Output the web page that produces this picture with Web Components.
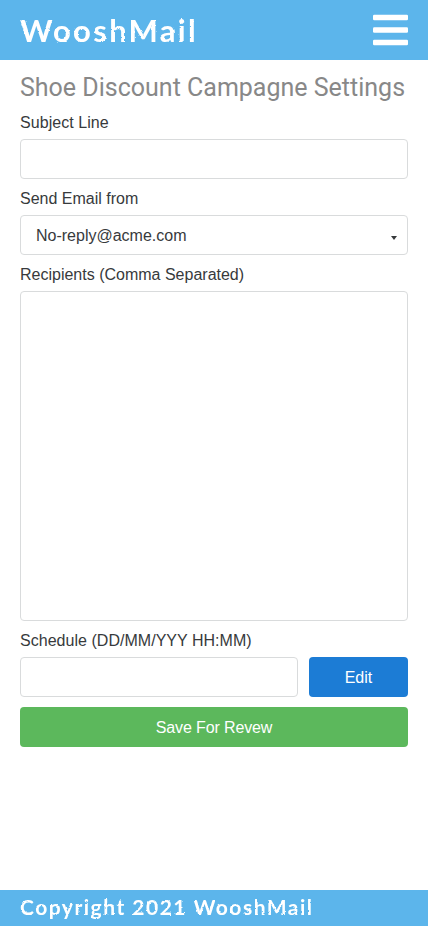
<!DOCTYPE html>
<html lang="en">
<head>
<meta charset="utf-8">
<title>WooshMail</title>
<style>
  body { margin: 0; background: #fff; color: #373a3c; font: 16px/24px "Liberation Sans", Arial, sans-serif; }
</style>
</head>
<body>
<woosh-page>
  <woosh-header slot="header"></woosh-header>
  <woosh-title>Shoe Discount Campagne Settings</woosh-title>
  <woosh-field label="Subject Line" style="letter-spacing:.06px"></woosh-field>
  <woosh-field label="Send Email from" kind="select">No-reply@acme.com</woosh-field>
  <woosh-field label="Recipients (Comma Separated)" style="--box-height:330px"></woosh-field>
  <woosh-field label="Schedule (DD/MM/YYY HH:MM)" style="letter-spacing:.03px">
    <woosh-button slot="action" style="--fill:#1c7cd5;--width:99px">Edit</woosh-button>
  </woosh-field>
  <woosh-button style="margin-top:10px;letter-spacing:-.12px;--fill:#5cb85c">Save For Revew</woosh-button>
  <woosh-footer slot="footer"></woosh-footer>
</woosh-page>
<script>
const define = (name, html) => customElements.define(name, class extends HTMLElement {
  connectedCallback() {
    if (this.shadowRoot) return;
    this.attachShadow({ mode: 'open' }).innerHTML = html(this);
  }
});

define('woosh-page', () => `
  <style>
    :host { display: flex; flex-direction: column; min-height: 100vh; }
    main { flex: 1; padding: 10px 20px; }
  </style>
  <slot name="header"></slot><main><slot></slot></main><slot name="footer"></slot>`);

define('woosh-chalk', () => `
  <style>
    :host { display: block; color: #fff; font-family: Lato, sans-serif; font-weight: 700; white-space: nowrap; }
    span { display: block; filter: url(#chalk); }
    svg { position: absolute; width: 0; height: 0; }
  </style>
  <svg aria-hidden="true"><filter id="chalk" x="-5%" y="-10%" width="110%" height="120%">
    <feTurbulence type="fractalNoise" baseFrequency="0.3" numOctaves="2" seed="4"/>
    <feDisplacementMap in="SourceGraphic" scale="2.2" xChannelSelector="R" yChannelSelector="G"/>
  </filter></svg>
  <span><slot></slot></span>`);

define('woosh-header', () => `
  <style>
    :host { display: flex; align-items: center; justify-content: space-between; height: 60px; padding: 0 20px; background: #5cb5eb; }
    woosh-chalk { font-size: 31px; line-height: 60px; letter-spacing: 2.3px; }
    svg { display: block; width: 35px; height: 40px; fill: #fff; }
  </style>
  <woosh-chalk>WooshMail</woosh-chalk>
  <svg viewBox="0 0 448 512" aria-label="Menu">
    <rect y="60" width="448" height="72" rx="16"/><rect y="220" width="448" height="72" rx="16"/><rect y="380" width="448" height="72" rx="16"/>
  </svg>`);

define('woosh-footer', () => `
  <style>
    :host { display: block; height: 36px; padding: 0 20px; background: #5cb5eb; }
    woosh-chalk { font-size: 21px; line-height: 34px; letter-spacing: 1.5px; }
  </style>
  <woosh-chalk>Copyright 2021 WooshMail</woosh-chalk>`);

define('woosh-title', () => `
  <style>
    :host { display: block; font: 25px/36px Roboto, sans-serif; color: #888; white-space: nowrap; }
  </style><slot></slot>`);

define('woosh-field', el => `
  <style>
    :host { display: block; padding-top: 5px; margin-bottom: 3px; }
    label { display: block; height: 28px; line-height: 24px; white-space: nowrap; }
    .row { display: flex; gap: 11px; }
    .box { box-sizing: border-box; flex: 1; height: var(--box-height, 40px); border: 1px solid #d9dbdc;
      border-radius: 4px; padding: 0 10px 0 15px; line-height: 40px; display: flex; justify-content: space-between; align-items: flex-start; }
    svg { width: 6px; height: 4px; fill: #373a3c; margin-top: 20px; }
  </style>
  <label>${el.getAttribute('label')}</label>
  <div class="row">
    <div class="box"><slot></slot>${el.getAttribute('kind') === 'select' ? '<svg viewBox="0 0 6 4"><path d="M0 0h6L3 4z"/></svg>' : ''}</div>
    <slot name="action"></slot>
  </div>`);

define('woosh-button', () => `
  <style>
    :host { display: block; box-sizing: border-box; width: var(--width, auto); height: 40px; line-height: 41px;
      border-radius: 4px; background: var(--fill); color: #fff; text-align: center; }
  </style><slot></slot>`);
</script>
</body>
</html>
